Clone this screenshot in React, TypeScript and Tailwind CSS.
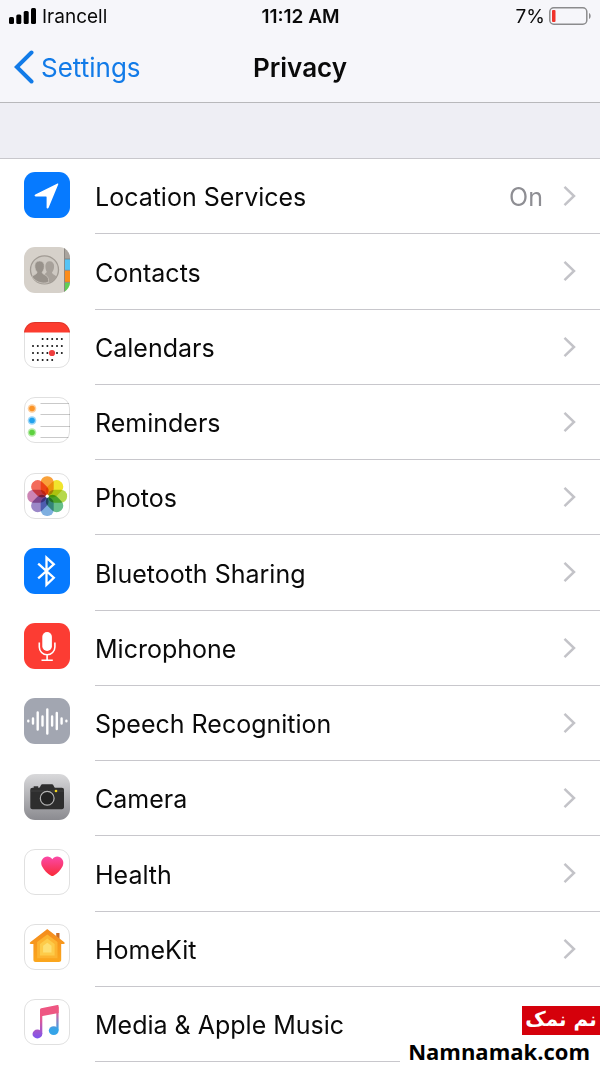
import type { ReactNode } from "react";

const LocationIcon = () => (
  <svg viewBox="0 0 46 46" className="size-full bg-[#067aff]">
    <path
      d="M34.2 12.4 24.6 35.800c-.5 1-2 .8-2-.4V25.200c0-.6-.2-.8-.8-.8H11.600c-1.200 0-1.400-1.300-.3-1.800L33 11.800c.9-.4 1.500-.1 1.200.6Z"
      fill="#fff"
    />
  </svg>
);

const ContactsIcon = () => (
  <svg viewBox="0 0 46 46" className="size-full bg-[#d6d1ca]">
    <path d="M40.5 0H46v12h-5.5z" fill="#a9a49e" />
    <path d="M40.5 12H46v11h-5.5z" fill="#55c4f5" />
    <path d="M40.5 23.5H46V35h-5.5z" fill="#fb8c1a" />
    <path d="M40.5 35.5H46V46h-5.5z" fill="#5fce55" />
    <path d="M40.5 0v46M41 12h5M41 23.3h5M41 35.3h5" stroke="#7f7b76" strokeWidth=".8" />
    <circle cx="20.5" cy="22.8" r="14" fill="#cec9c2" stroke="#a19b94" strokeWidth="1.3" />
    <path
      d="M25.5 14.3c3 0 4.7 2 4.6 5-.1 2.8-.8 4.7-2.1 6 .2 2.5 3.6 2.7 4.8 4.5-2.4 3.6-5.6 5.2-8.8 5.8l-4.2-7.7 3-3c-2-3.3-2.5-10.6 2.7-10.600Z"
      fill="#a7a19a"
    />
    <path
      d="M15.6 14c3.4 0 5 2.4 4.7 5.7-.2 2.5-1 4.3-2.2 5.5.3 2.7 5.6 2.6 6.3 6.4.2 1.2.1 2.6-.2 4-6.8 1.5-12.700-.8-16.100-5.900 1.300-2 5-2.200 5-4.700-1.400-1.400-2.300-3.600-2.300-6.100 0-3 1.600-4.900 4.800-4.900Z"
      fill="#98928b"
      stroke="#cec9c2"
      strokeWidth=".7"
    />
  </svg>
);

const calendarRows = [
  { y: 17, from: 2, to: 6 },
  { y: 24, from: 0, to: 6 },
  { y: 31, from: 0, to: 6 },
  { y: 38, from: 0, to: 4 },
];

const CalendarIcon = () => (
  <svg viewBox="0 0 46 46" className="size-full bg-white">
    <path d="M0 0h46v10.500H0z" fill="#fc3c2f" />
    {calendarRows.map(({ y, from, to }) =>
      Array.from({ length: to - from + 1 }, (_, i) => (
        <circle key={`${y}-${i}`} cx={9 + (from + i) * 4.8} cy={y} r="1" fill="#111" />
      )),
    )}
    <circle cx="28" cy="31" r="3.1" fill="#ee3e3e" />
  </svg>
);

const RemindersIcon = () => (
  <svg viewBox="0 0 46 46" className="size-full bg-white">
    <path
      d="M16.5 6.5H46M16.5 17.5H46M16.5 29.5H46M16.5 40.5H46"
      stroke="#c3c3c3"
      strokeWidth=".9"
    />
    {[
      { y: 11.5, color: "#fb9427" },
      { y: 23.5, color: "#22a2ee" },
      { y: 35.5, color: "#5dd13f" },
    ].map(({ y, color }) => (
      <g key={color} fill={color}>
        <circle cx="8" cy={y} r="4.3" opacity=".45" />
        <circle cx="8" cy={y} r="2.8" />
      </g>
    ))}
  </svg>
);

const petals = ["#f9a13a", "#f1e52d", "#b6d84c", "#67bf8a", "#7eafe0", "#9b87c8", "#cc84b4", "#f36b5c"];

const PhotosIcon = () => (
  <svg viewBox="0 0 46 46" className="size-full bg-white">
    {petals.map((color, i) => (
      <rect
        key={color}
        x="16.7"
        y="3.3"
        width="13"
        height="19"
        rx="6.2"
        fill={color}
        transform={`rotate(${i * 45} 23.2 23.2)`}
        className="mix-blend-multiply"
      />
    ))}
    <circle cx="23.2" cy="23.2" r="1.6" fill="#fff" />
  </svg>
);

const BluetoothIcon = () => (
  <svg viewBox="0 0 46 46" className="size-full bg-[#067aff]">
    <path
      d="m14.200 15.700 15.600 14-7.300 7.100V9.700l7.300 6.600-15.600 14"
      fill="none"
      stroke="#fff"
      strokeWidth="2.3"
    />
  </svg>
);

const MicrophoneIcon = () => (
  <svg viewBox="0 0 46 46" className="size-full bg-[#fc3c33]">
    <rect x="18.3" y="9" width="9.6" height="19" rx="4.8" fill="#fff" />
    <path
      d="M15.3 19.500V24a7.800 7.800 0 0 0 15.600 0v-4.500M23.100 32v5M17.500 37.200h11.300"
      fill="none"
      stroke="#fff"
      strokeWidth="1.6"
    />
  </svg>
);

const SpeechIcon = () => (
  <svg viewBox="0 0 46 46" className="size-full bg-[#a2a6b1]">
    <path
      d="M4.3 22.700v.6M9 20.500v5M13.700 14.500v17M18.500 18.500v9M23.300 11.500v24M28.100 18.500v9M32.800 15v16M37.600 20.500v5M42.400 22.700v.6"
      fill="none"
      stroke="#fff"
      strokeWidth="2.4"
      strokeLinecap="round"
    />
  </svg>
);

const CameraIcon = () => (
  <svg viewBox="0 0 46 46" className="size-full bg-linear-to-b from-[#d9d9db] to-[#8b8b90]">
    <path d="M9.700 12.200h4.500v2H9.700z" fill="#333" />
    <path
      d="M8.500 13.800h6.300c1.700 0 1.700-3.600 3.400-3.600h9.900c1.700 0 1.700 3.600 3.400 3.600h6.300c1.500 0 2.200.8 2.200 2.200v17c0 1.400-.7 2.200-2.200 2.200H8.500c-1.500 0-2.200-.8-2.200-2.200V16c0-1.400.7-2.200 2.200-2.200Z"
      fill="#2e2e2e"
    />
    <path d="M6.300 17h33.700" stroke="#484848" strokeWidth=".7" />
    <circle cx="23.2" cy="24.3" r="8.3" fill="#2e2e2e" />
    <circle cx="23.2" cy="24.3" r="6.9" fill="#232323" stroke="#b5b5b5" strokeWidth="1.2" />
    <circle cx="32" cy="17" r="1.3" fill="#f0d31c" />
  </svg>
);

const HealthIcon = () => (
  <svg viewBox="0 0 46 46" className="size-full bg-white">
    <linearGradient id="heart" x1="0" y1="0" x2="0" y2="1">
      <stop stopColor="#fb49a8" />
      <stop offset="1" stopColor="#f92b38" />
    </linearGradient>
    <path
      d="M28.300 10.200c-2-3-5.200-3.400-7.700-2-3.200 1.700-4.200 5.500-2.600 9 1.800 3.900 5.500 7.300 9.100 9.500.8.500 1.600.5 2.400 0 3.600-2.200 7.300-5.600 9.100-9.500 1.600-3.500.6-7.300-2.600-9-2.500-1.400-5.700-1-7.700 2Z"
      fill="url(#heart)"
    />
  </svg>
);

const HomeKitIcon = () => (
  <svg viewBox="0 0 46 46" className="size-full bg-white">
    <linearGradient id="house" x1="0" y1="0" x2="0" y2="1">
      <stop stopColor="#f48b1d" />
      <stop offset="1" stopColor="#fba71d" />
    </linearGradient>
    <path d="M32.200 9h3.300v8h-3.300z" fill="#c96d27" />
    <path
      d="M22.400 5.700c.6-.5 1.200-.5 1.800 0L40 18c1.200 1 .9 2-.5 2h-2.300v15.800c0 1.400-.9 2.200-2.200 2.200H11.600c-1.300 0-2.200-.8-2.200-2.200V20H7c-1.400 0-1.700-1-.5-2Z"
      fill="url(#house)"
    />
    <path d="M23.300 10.500 33.500 18v16.300H13.100V18Z" fill="#fcb431" />
    <path d="m23.300 14.500 7.300 5.500v11.500H16V20Z" fill="#fdcb49" />
    <path d="m23.300 18.700 4.200 3v6.700h-8.400v-6.700Z" fill="#fddf72" />
  </svg>
);

const MusicIcon = () => (
  <svg viewBox="0 0 46 46" className="size-full bg-white">
    <linearGradient id="noteLeft" gradientUnits="userSpaceOnUse" x1="0" y1="10" x2="0" y2="39">
      <stop stopColor="#f8546f" />
      <stop offset=".3" stopColor="#e9588c" />
      <stop offset="1" stopColor="#7e55ee" />
    </linearGradient>
    <linearGradient id="noteRight" gradientUnits="userSpaceOnUse" x1="0" y1="6" x2="0" y2="36">
      <stop stopColor="#f8546f" />
      <stop offset=".35" stopColor="#c968a8" />
      <stop offset=".8" stopColor="#35a4e8" />
    </linearGradient>
    <path d="M32.300 8h2.300v23.500h-2.300z" fill="url(#noteRight)" />
    <ellipse cx="29.700" cy="31.600" rx="4.900" ry="4.400" fill="url(#noteRight)" />
    <path d="M16 12h2.300v23H16z" fill="url(#noteLeft)" />
    <ellipse cx="13.400" cy="35" rx="4.900" ry="4.400" fill="url(#noteLeft)" />
    <path d="M16 10.700c0-.8.400-1.300 1.200-1.500l16.200-3.200c.8-.2 1.200.1 1.200.9V14L16 17.600Z" fill="#ee5682" />
  </svg>
);

type Item = { label: string; icon: ReactNode; value?: string; bordered?: boolean };

const items: Item[] = [
  { label: "Location Services", icon: <LocationIcon />, value: "On" },
  { label: "Contacts", icon: <ContactsIcon /> },
  { label: "Calendars", icon: <CalendarIcon />, bordered: true },
  { label: "Reminders", icon: <RemindersIcon />, bordered: true },
  { label: "Photos", icon: <PhotosIcon />, bordered: true },
  { label: "Bluetooth Sharing", icon: <BluetoothIcon /> },
  { label: "Microphone", icon: <MicrophoneIcon /> },
  { label: "Speech Recognition", icon: <SpeechIcon /> },
  { label: "Camera", icon: <CameraIcon /> },
  { label: "Health", icon: <HealthIcon />, bordered: true },
  { label: "HomeKit", icon: <HomeKitIcon />, bordered: true },
  { label: "Media & Apple Music", icon: <MusicIcon />, bordered: true },
];

const Row = ({ label, icon, value, bordered }: Item) => (
  <li className="flex">
    <a href="#" className="flex flex-1 items-center pl-6">
      <span
        className={`mb-1 size-[46px] shrink-0 overflow-hidden rounded-[11px] ${
          bordered ? "outline -outline-offset-1 outline-black/12" : ""
        }`}
      >
        {icon}
      </span>
      <span className="ml-[25px] flex flex-1 items-center self-stretch border-b border-[#c8c7cc] pt-1 pr-6">
        <span className="flex-1 text-[25px]">{label}</span>
        {value && <span className="mr-5 text-[25px] text-[#8e8e93]">{value}</span>}
        <svg viewBox="0 0 13 22" className="mb-1 h-[22px] w-[13px]">
          <path d="m1.500 1.800 9.500 9.200-9.500 9.200" fill="none" stroke="#c3c3c8" strokeWidth="2.5" />
        </svg>
      </span>
    </a>
  </li>
);

const StatusBar = () => (
  <div className="grid h-8 grid-cols-3 items-center pr-2 pl-[9px] text-[19px]">
    <div className="flex items-center gap-1.5">
      <svg viewBox="0 0 27 16" className="h-4 w-[27px]">
        <rect y="9" width="5" height="7" rx="1.5" />
        <rect x="7.3" y="6.5" width="5" height="9.5" rx="1.5" />
        <rect x="14.7" y="3" width="5" height="13" rx="1.5" />
        <rect x="22" width="5" height="16" rx="1.5" />
      </svg>
      <span className="pt-0.5">Irancell</span>
    </div>
    <span className="pt-0.5 text-center font-semibold">11:12 AM</span>
    <div className="flex items-center justify-end gap-1">
      <span className="pt-0.5">7%</span>
      <svg viewBox="0 0 43 18" className="h-[18px] w-[43px]">
        <rect x=".8" y=".8" width="37" height="16.4" rx="4" fill="none" stroke="#8b8b8d" strokeWidth="1.5" />
        <path d="M40 6c2.200.8 2.200 5.200 0 6Z" fill="#8b8b8d" />
        <rect x="3" y="3" width="3.5" height="12" rx="1" fill="#f0332b" />
      </svg>
    </div>
  </div>
);

const App = () => {
  return (
    <div className="relative min-h-screen overflow-hidden bg-white font-['Inter','Liberation_Sans',sans-serif] text-[#0a0a0a]">
      <header className="border-b border-[#b8b8bb] bg-[#f6f6fa]">
        <StatusBar />
        <div className="grid h-[70px] grid-cols-[1fr_auto_1fr] items-center px-3.5">
          <a href="#" className="flex items-center gap-[7px] text-[26px] text-[#127be8]">
            <svg viewBox="0 0 20 34" className="h-[34px] w-5">
              <path
                d="M17.500 2.500 2.800 17l14.700 14.500"
                fill="none"
                stroke="currentColor"
                strokeWidth="4"
                strokeLinecap="round"
              />
            </svg>
            Settings
          </a>
          <h1 className="text-[26px] font-semibold">Privacy</h1>
        </div>
      </header>
      <main className="pb-1.5">
        <div className="h-14 border-b border-[#c8c7cc] bg-[#eeeef4]" />
        <ul className="grid min-h-[903px] auto-rows-fr">
          {items.map((item) => (
            <Row key={item.label} {...item} />
          ))}
        </ul>
      </main>
      <div className="absolute right-0 bottom-0 flex w-[200px] flex-col items-end">
        <span
          lang="fa"
          dir="rtl"
          className="flex h-[29px] w-[78px] items-center justify-center bg-[#d5000b] pb-1 font-['DejaVu_Sans',sans-serif] text-[20px] font-bold whitespace-nowrap text-white"
        >
          نم نمک
        </span>
        <a
          href="#"
          className="h-[33px] w-full bg-white pr-2.5 text-right font-['Open_Sans',sans-serif] text-[22px] leading-8 font-bold text-black"
        >
          Namnamak.com
        </a>
      </div>
    </div>
  );
};

export default App;
